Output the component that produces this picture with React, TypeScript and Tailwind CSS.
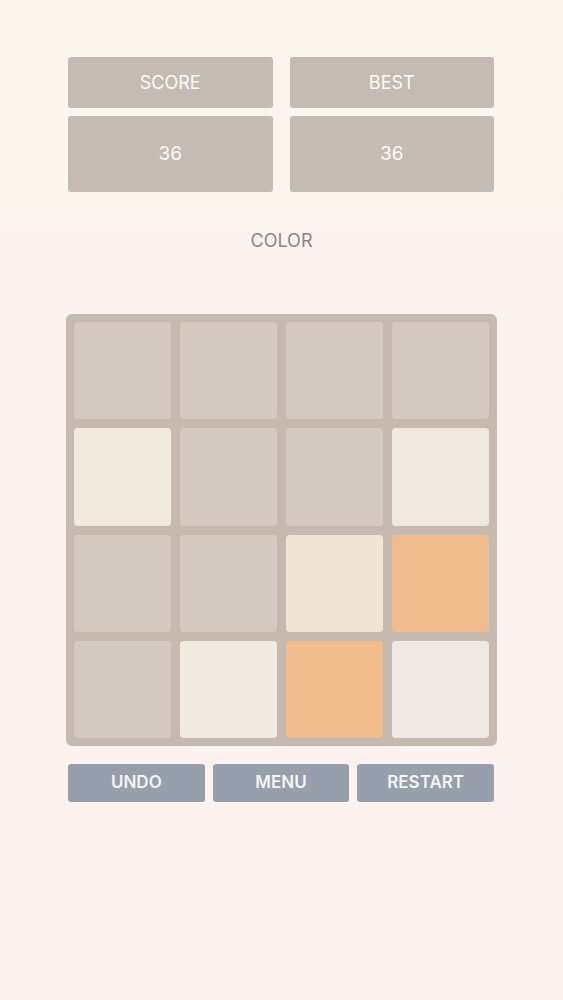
import React from "react";

const EMPTY = "bg-[#d4c9c0]";
const tiles: string[] = [
  EMPTY, EMPTY, EMPTY, EMPTY,
  "bg-[#f0eadf]", EMPTY, EMPTY, "bg-[#efe8de]",
  EMPTY, EMPTY, "bg-[#f1e5d3]", "bg-[#f2bd8d]",
  EMPTY, "bg-[#f1eae1]", "bg-[#f2bd8d]", "bg-[#f0e8e3]",
];

export default function App() {
  return (
    <div
      className="w-[563px] min-h-[1000px] bg-[linear-gradient(to_bottom,#faf6ec_0px,#faf6ec_185px,#fcf3f0_235px,#fcf3f0_100%)] flex flex-col"
      style={{ fontFamily: "Inter, 'Open Sans', sans-serif" }}
    >
      <div className="h-[200px] pt-[57px] pl-[68px] pr-[69px]">
        <div className="grid grid-cols-2 gap-x-[17px] gap-y-[8px]">
          <div className="h-[51px] bg-[#c6bbb2] rounded-[3px] flex items-center justify-center text-[18px] text-[#fdfaf2] font-normal">
            SCORE
          </div>
          <div className="h-[51px] bg-[#c6bbb2] rounded-[3px] flex items-center justify-center text-[18px] text-[#fdfaf2] font-normal">
            BEST
          </div>
          <div className="h-[76px] bg-[#c6bbb2] rounded-[3px] flex items-center justify-center text-[19px] text-[#fdfaf2] font-normal">
            36
          </div>
          <div className="h-[76px] bg-[#c6bbb2] rounded-[3px] flex items-center justify-center text-[19px] text-[#fdfaf2] font-normal">
            36
          </div>
        </div>
      </div>
      <div className="mt-[29px] h-[24px] leading-[24px] text-center text-[18px] text-[#8b8683]">
        COLOR
      </div>
      <div className="mt-[61px] ml-[66px] w-[431px] h-[432px] bg-[#c5b9b0] rounded-[6px] p-[8px] grid grid-cols-4 grid-rows-4 gap-[9px]">
        {tiles.map((c, i) => (
          <div key={i} className={`${c} rounded-[4px]`} />
        ))}
      </div>
      <div className="mt-[18px] ml-[68px] w-[426px] grid grid-cols-3 gap-[8px]">
        {["UNDO", "MENU", "RESTART"].map((t) => (
          <div
            key={t}
            className="h-[38px] bg-[#969fab] rounded-[3px] flex items-center justify-center text-[17px] font-semibold text-[#f4f5f7]"
          >
            {t}
          </div>
        ))}
      </div>
    </div>
  );
}
